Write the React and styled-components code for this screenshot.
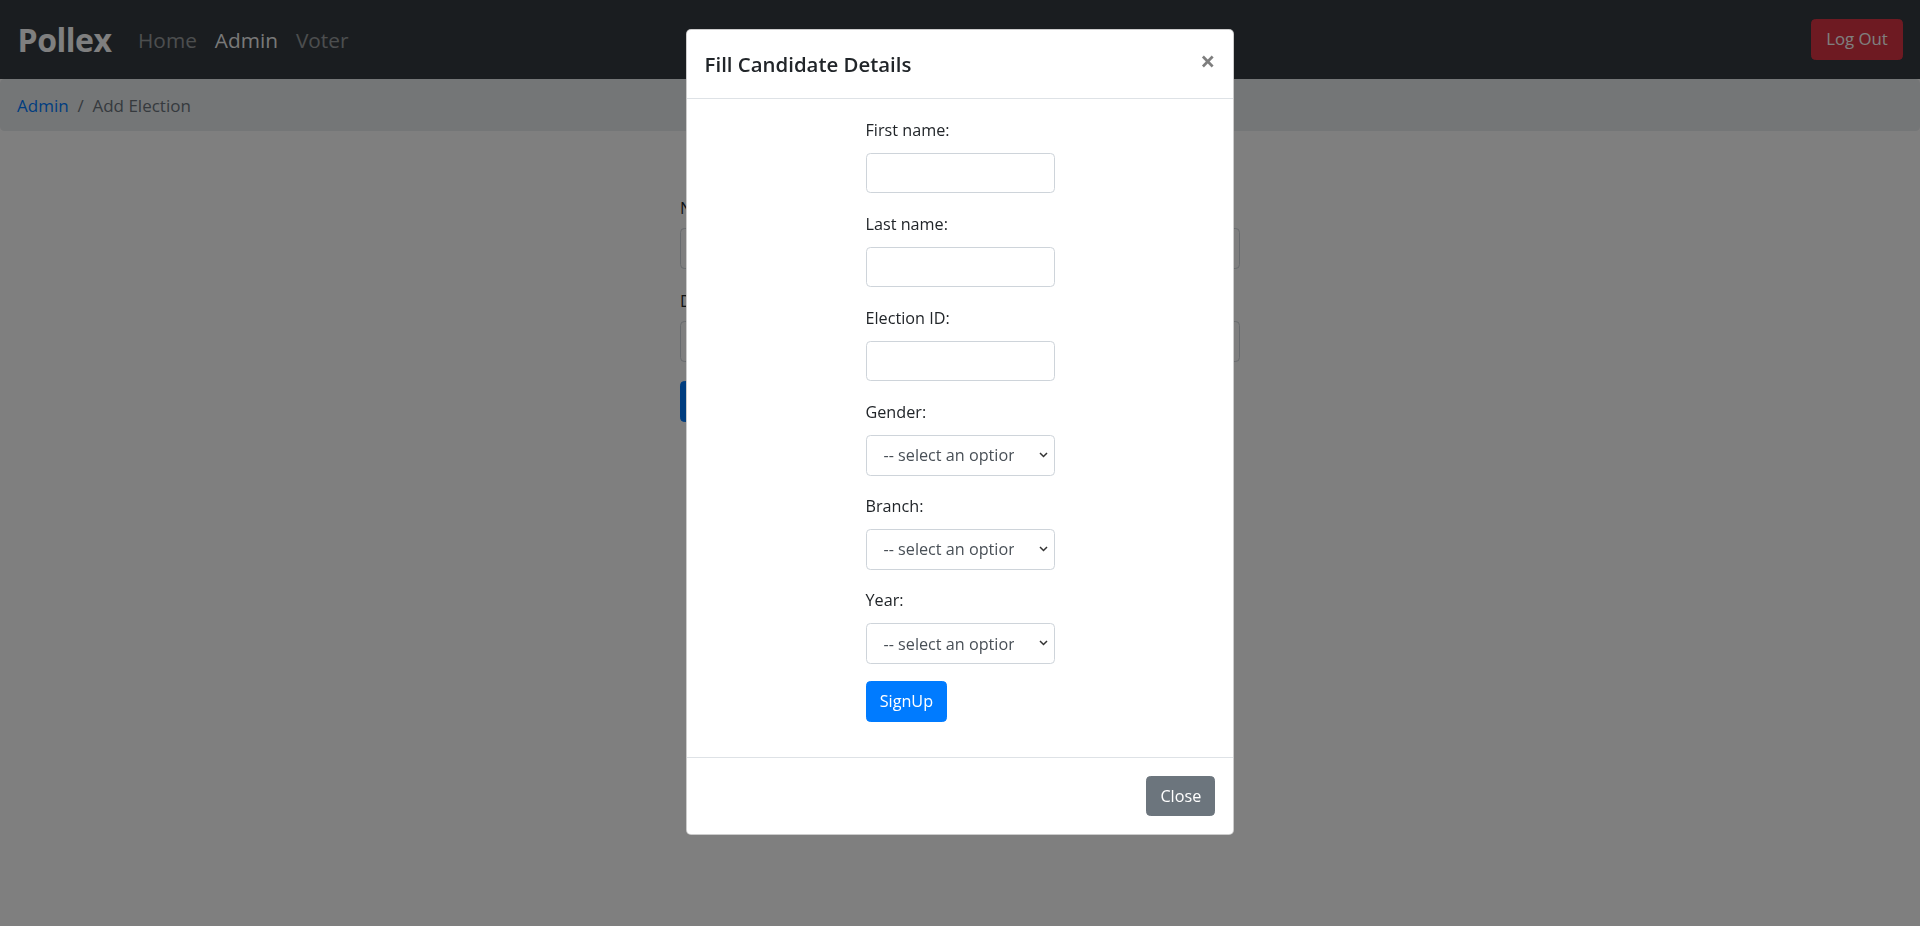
import React from 'react'
import styled, { createGlobalStyle } from 'styled-components'

const GlobalStyle = createGlobalStyle`
  * { box-sizing: border-box; }
  body {
    margin: 0;
    background: #fff;
    font-family: "Open Sans", "Noto Sans", sans-serif;
    font-size: 16.2px;
    color: #212529;
    overflow: hidden;
  }
`

// page behind the modal
const Navbar = styled.nav`
  display: flex;
  align-items: center;
  height: 79px;
  padding: 0 17px 0 17.6px;
  background: #343a40;
`

const Brand = styled.a`
  font-size: 32px;
  font-weight: 700;
  letter-spacing: -0.5px;
  color: #fff;
  margin-right: 17.6px;
  line-height: 1;
  text-decoration: none;
`

const NavLink = styled.a`
  font-size: 20.8px;
  padding: 0 9px;
  color: ${p => (p.$active ? 'rgba(255,255,255,.95)' : 'rgba(255,255,255,.5)')};
  text-decoration: none;
`

const Button = styled.button`
  height: 40.5px;
  padding: 0 13.2px;
  border: 1px solid ${p => p.$bg};
  border-radius: 4.4px;
  background: ${p => p.$bg};
  color: #fff;
  font-family: inherit;
  font-size: 16.2px;
  line-height: 1;
`

const LogOut = styled(Button)`
  margin-left: auto;
  width: 92px;
  font-size: 16.8px;
`

const Breadcrumb = styled.ol`
  display: flex;
  align-items: center;
  list-style: none;
  margin: 0 0 17.6px;
  height: 52px;
  padding: 0 17px;
  background: #e9ecef;
  border-radius: 4.4px;
  font-size: 17px;
`

const Crumb = styled.li`
  color: ${p => (p.$link ? '#007bff' : '#6c757d')};
`

const Sep = styled.li`
  color: #6c757d;
  padding: 0 8.8px;
`

const PageForm = styled.form`
  width: 560px;
  margin: 0 auto;
  padding-top: 46px;
`

const PageLabel = styled.label`
  display: block;
  line-height: 26.4px;
  margin-bottom: 7px;
`

const PageInput = styled.input`
  display: block;
  width: 100%;
  height: 41px;
  border: 1px solid #ced4da;
  border-radius: 4.4px;
  margin-bottom: 19px;
`

// modal
const Backdrop = styled.div`
  position: fixed;
  inset: 0;
  background: rgba(0, 0, 0, 0.5);
`

const ModalLayer = styled.div`
  position: fixed;
  inset: 0;
  display: flex;
  justify-content: center;
  align-items: flex-start;
  padding-top: 29px;
`

const Modal = styled.div`
  width: 548px;
  display: flex;
  flex-direction: column;
  background: #fff;
  border: 1px solid rgba(0, 0, 0, 0.2);
  border-radius: 5px;
`

const Header = styled.div`
  display: flex;
  align-items: flex-start;
  padding: 17.6px;
  border-bottom: 1px solid #dee2e6;
`

const Title = styled.h5`
  margin: 0;
  font-size: 20.4px;
  font-weight: 600;
  line-height: 33px;
`

const CloseX = styled.button`
  margin: -17.6px -17.6px -17.6px auto;
  padding: 17.6px;
  border: 0;
  background: transparent;
  font-family: inherit;
  font-size: 26.4px;
  font-weight: 700;
  line-height: 1;
  color: #000;
  opacity: 0.5;
`

const Body = styled.div`
  padding: 17.6px;
`

const Form = styled.form`
  width: 189px;
  margin: 0 auto;
`

const Group = styled.div`
  margin-bottom: 17.6px;
`

const Label = styled.label`
  display: block;
  line-height: 26px;
  margin-bottom: 10px;
`

const Input = styled.input`
  display: block;
  width: 100%;
  height: 40.5px;
  padding: 0 13px;
  border: 1px solid #ced4da;
  border-radius: 4.4px;
  font-family: inherit;
  font-size: 16.2px;
  color: #495057;
`

const SelectBox = styled.div`
  position: relative;
`

const Select = styled.select`
  display: block;
  width: 100%;
  height: 40.5px;
  padding: 0 40px 0 17px;
  border: 1px solid #ced4da;
  border-radius: 4.4px;
  background: #fff;
  appearance: none;
  font-family: inherit;
  font-size: 16.2px;
  color: #495057;
`

const Chevron = styled.svg`
  position: absolute;
  right: 7px;
  top: 17px;
  pointer-events: none;
`

const Footer = styled.div`
  display: flex;
  justify-content: flex-end;
  padding: 13.2px;
  border-top: 1px solid #dee2e6;
`

const FooterButton = styled(Button)`
  margin: 4.4px;
`

function SelectField({ label }) {
  return (
    <Group>
      <Label>{label}</Label>
      <SelectBox>
        <Select defaultValue="">
          <option value="" disabled>-- select an option --</option>
        </Select>
        <Chevron width="9" height="6" viewBox="0 0 9 6">
          <path d="M1 1l3.5 3.5L8 1" fill="none" stroke="#333" strokeWidth="1.5" />
        </Chevron>
      </SelectBox>
    </Group>
  )
}

export default function App() {
  return (
    <>
      <GlobalStyle />
      <Navbar>
        <Brand>Pollex</Brand>
        <NavLink>Home</NavLink>
        <NavLink $active>Admin</NavLink>
        <NavLink>Voter</NavLink>
        <LogOut $bg="#dc3545">Log Out</LogOut>
      </Navbar>
      <Breadcrumb>
        <Crumb $link>Admin</Crumb>
        <Sep>/</Sep>
        <Crumb>Add Election</Crumb>
      </Breadcrumb>
      <PageForm>
        <PageLabel>Name</PageLabel>
        <PageInput />
        <PageLabel>Description</PageLabel>
        <PageInput />
        <Button type="button" $bg="#007bff">Add Election</Button>
      </PageForm>

      <Backdrop />
      <ModalLayer>
        <Modal>
          <Header>
            <Title>Fill Candidate Details</Title>
            <CloseX>×</CloseX>
          </Header>
          <Body>
            <Form>
              <Group>
                <Label>First name:</Label>
                <Input type="text" />
              </Group>
              <Group>
                <Label>Last name:</Label>
                <Input type="text" />
              </Group>
              <Group>
                <Label>Election ID:</Label>
                <Input type="text" />
              </Group>
              <SelectField label="Gender:" />
              <SelectField label="Branch:" />
              <SelectField label="Year:" />
              <Group>
                <Button type="button" $bg="#007bff">SignUp</Button>
              </Group>
            </Form>
          </Body>
          <Footer>
            <FooterButton $bg="#6c757d">Close</FooterButton>
          </Footer>
        </Modal>
      </ModalLayer>
    </>
  )
}
